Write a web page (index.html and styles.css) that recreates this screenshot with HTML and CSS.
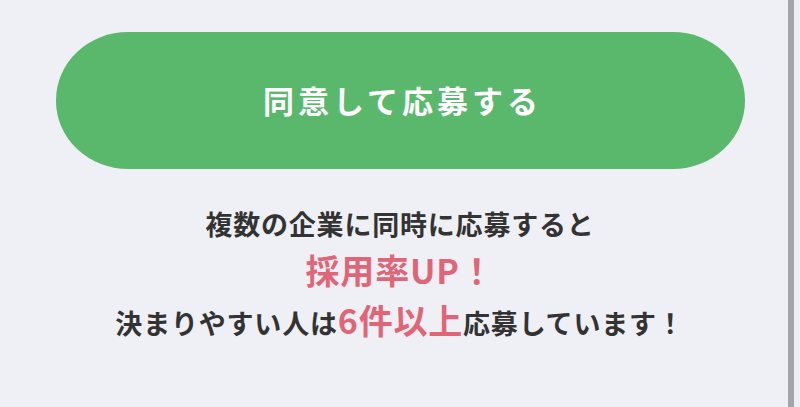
FILE: index.html
```html
<!DOCTYPE html>
<html lang="ja">
<head>
<meta charset="utf-8">
<link rel="stylesheet" href="styles.css">
</head>
<body>
<div class="page">
  <div class="content">
    <button class="apply">同意して応募する</button>
    <div class="message">
      <p class="line1">複数の企業に同時に応募すると</p>
      <p class="line2">採用率UP！</p>
      <p class="line3">決まりやすい人は<span class="em">6件以上</span>応募しています！</p>
    </div>
  </div>
  <div class="scrollbar"></div>
</div>
</body>
</html>
```
FILE: styles.css
```css
html, body {
  margin: 0;
  padding: 0;
  background: #eff0f5;
}
body {
  font-family: "Noto Sans CJK JP", "Noto Sans", sans-serif;
  width: 800px;
  height: 407px;
  overflow: hidden;
}
.page {
  position: relative;
  width: 800px;
  height: 407px;
}
.content {
  display: flex;
  flex-direction: column;
  align-items: center;
  padding-top: 32px;
}
.apply {
  width: 689px;
  height: 137px;
  margin-left: 1px;
  border: none;
  border-radius: 72px / 68px;
  background: #5ab86d;
  color: #ffffff;
  font-family: inherit;
  font-size: 31px;
  font-weight: 700;
  letter-spacing: 4px;
  padding: 0 0 2px 4px;
}
.message {
  margin-top: 32px;
  text-align: center;
  color: #333333;
  font-weight: 700;
  letter-spacing: 0.8px;
}
.message p {
  margin: 0;
}
.line1 {
  font-size: 27px;
  line-height: 46px;
}
.line2 {
  font-size: 34px;
  line-height: 46px;
  color: #e06577;
}
.line3 {
  font-size: 27px;
  line-height: 54px;
}
.em {
  font-size: 34px;
  color: #e06577;
}
.scrollbar {
  position: absolute;
  top: 0;
  left: 788px;
  width: 6px;
  height: 407px;
  background: #a4a4a9;
}
```
